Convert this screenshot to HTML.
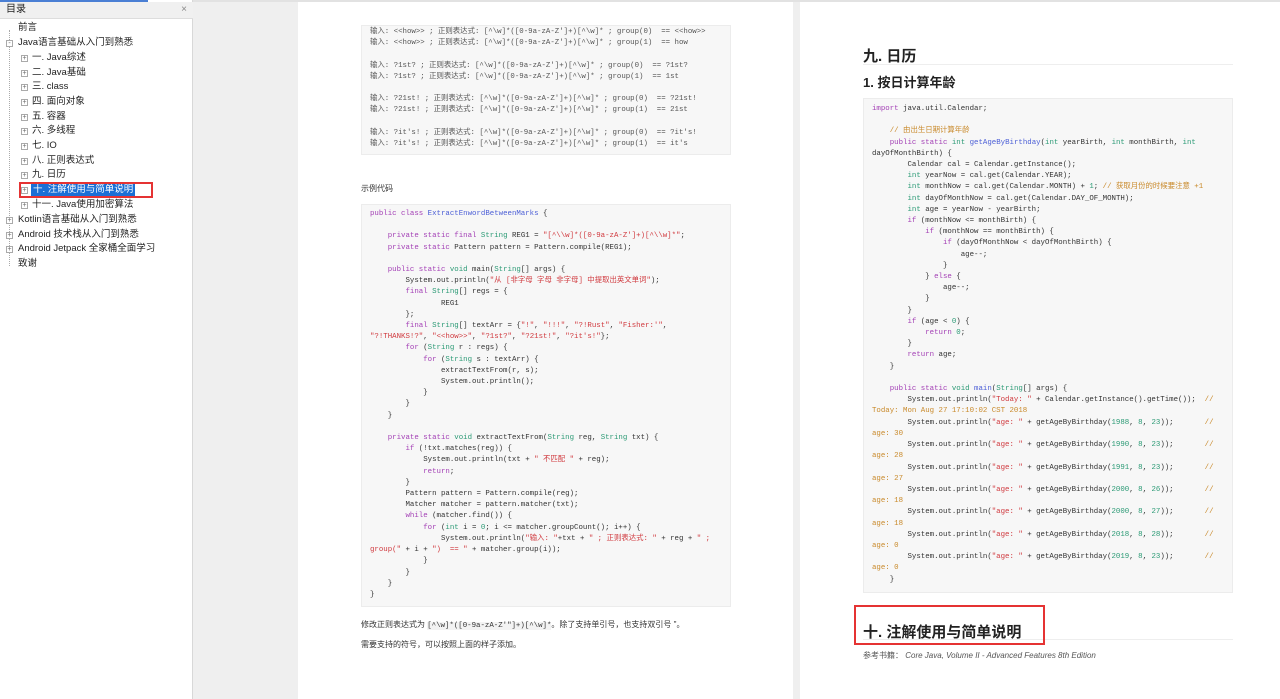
<!DOCTYPE html>
<html><head><meta charset="utf-8"><style>
*{margin:0;padding:0;box-sizing:border-box}
body{width:1280px;height:699px;overflow:hidden;background:#efefef;position:relative;font-family:"Liberation Sans","Noto Sans CJK SC",sans-serif;color:#333}
.side{position:absolute;left:0;top:0;width:193px;height:699px;background:#fff;border-right:1px solid #d8d8d8}
.bar{position:absolute;left:0;top:0;width:148px;height:2px;background:#4a7fd4}
.tt{position:absolute;left:0;top:2px;width:193px;height:17px;background:#f0f0f0;border-bottom:1px solid #ddd;font-size:10px;line-height:16px;padding:0 0 0 6px;color:#222}
.tt span{position:absolute;right:6px;top:0;color:#888;font-size:10px}
.it{position:absolute;font-size:9.5px;color:#222;white-space:nowrap;line-height:12px}
.pl{position:absolute;width:7px;height:7px;border:1px solid #aaa;font-size:7px;line-height:5px;text-align:center;color:#666;background:#fff}
.page{position:absolute;background:#fff;top:2px;height:697px}
.code{position:absolute;background:#f7f7f7;border:1px solid #ececec;font-family:"Liberation Mono","Noto Sans CJK SC",monospace;font-size:7.4px;line-height:11.2px;white-space:pre;color:#333;padding:0 8px}
.k{color:#a33fb5}.t{color:#2b9a75}.s{color:#d0393e}.f{color:#4b5ed6}.c{color:#c98a2b}.n{color:#2b9a75}
.p{position:absolute;font-size:8px;color:#333;white-space:nowrap}
.tree{position:absolute;left:0;top:2px;width:193px;height:260px}
</style></head><body>
<div style="position:absolute;left:0;top:0;width:1280px;height:2px;background:#e2e2e2"></div>
<div class="side">
<div class="tt">目录<span>×</span></div>
<div class="bar"></div>
<div class="tree">
<div style="position:absolute;left:9px;top:28px;width:1px;height:236px;border-left:1px dotted #aaa"></div>
<div class="it" style="left:18px;top:20px">前言</div>
<div class="pl" style="left:6px;top:38px">-</div><div class="it" style="left:18px;top:35px">Java语言基础从入门到熟悉</div>
<div class="pl" style="left:21px;top:53px">+</div><div class="it" style="left:32px;top:50px">一. Java综述</div>
<div class="pl" style="left:21px;top:68px">+</div><div class="it" style="left:32px;top:65px">二. Java基础</div>
<div class="pl" style="left:21px;top:82px">+</div><div class="it" style="left:32px;top:79px">三. class</div>
<div class="pl" style="left:21px;top:97px">+</div><div class="it" style="left:32px;top:94px">四. 面向对象</div>
<div class="pl" style="left:21px;top:112px">+</div><div class="it" style="left:32px;top:109px">五. 容器</div>
<div class="pl" style="left:21px;top:126px">+</div><div class="it" style="left:32px;top:123px">六. 多线程</div>
<div class="pl" style="left:21px;top:141px">+</div><div class="it" style="left:32px;top:138px">七. IO</div>
<div class="pl" style="left:21px;top:156px">+</div><div class="it" style="left:32px;top:153px">八. 正则表达式</div>
<div class="pl" style="left:21px;top:170px">+</div><div class="it" style="left:32px;top:167px">九. 日历</div>
<div class="pl" style="left:21px;top:185px">+</div><div class="it" style="left:31px;top:182px;background:#1a6fd6;color:#fff;padding:0 2px">十. 注解使用与简单说明</div>
<div style="position:absolute;left:19px;top:180px;width:134px;height:16px;border:2px solid #e53333"></div>
<div class="pl" style="left:21px;top:200px">+</div><div class="it" style="left:32px;top:197px">十一. Java使用加密算法</div>
<div class="pl" style="left:6px;top:215px">+</div><div class="it" style="left:18px;top:212px">Kotlin语言基础从入门到熟悉</div>
<div class="pl" style="left:6px;top:230px">+</div><div class="it" style="left:18px;top:227px">Android 技术栈从入门到熟悉</div>
<div class="pl" style="left:6px;top:244px">+</div><div class="it" style="left:18px;top:241px">Android Jetpack 全家桶全面学习</div>
<div class="it" style="left:18px;top:256px">致谢</div>
</div>
</div>

<div class="page" style="left:298px;width:495px"></div>
<div class="page" style="left:800px;width:480px"></div>

<div class="code" style="left:361px;top:25px;width:370px;height:130px;padding-top:1px;color:#555">输入: &lt;&lt;how&gt;&gt; ; 正则表达式: [^\w]*([0-9a-zA-Z']+)[^\w]* ; group(0)  == &lt;&lt;how&gt;&gt;
输入: &lt;&lt;how&gt;&gt; ; 正则表达式: [^\w]*([0-9a-zA-Z']+)[^\w]* ; group(1)  == how

输入: ?1st? ; 正则表达式: [^\w]*([0-9a-zA-Z']+)[^\w]* ; group(0)  == ?1st?
输入: ?1st? ; 正则表达式: [^\w]*([0-9a-zA-Z']+)[^\w]* ; group(1)  == 1st

输入: ?21st! ; 正则表达式: [^\w]*([0-9a-zA-Z']+)[^\w]* ; group(0)  == ?21st!
输入: ?21st! ; 正则表达式: [^\w]*([0-9a-zA-Z']+)[^\w]* ; group(1)  == 21st

输入: ?it's! ; 正则表达式: [^\w]*([0-9a-zA-Z']+)[^\w]* ; group(0)  == ?it's!
输入: ?it's! ; 正则表达式: [^\w]*([0-9a-zA-Z']+)[^\w]* ; group(1)  == it's</div>

<div class="p" style="left:361px;top:183px">示例代码</div>

<div class="code" style="left:361px;top:204px;width:370px;height:403px;padding-top:4px"><span class="k">public class</span> <span class="f">ExtractEnwordBetweenMarks</span> {

    <span class="k">private static final</span> <span class="t">String</span> REG1 = <span class="s">"[^\\w]*([0-9a-zA-Z']+)[^\\w]*"</span>;
    <span class="k">private static</span> Pattern pattern = Pattern.compile(REG1);

    <span class="k">public static</span> <span class="t">void</span> main(<span class="t">String</span>[] args) {
        System.out.println(<span class="s">"从 [非字母 字母 非字母] 中提取出英文单词"</span>);
        <span class="k">final</span> <span class="t">String</span>[] regs = {
                REG1
        };
        <span class="k">final</span> <span class="t">String</span>[] textArr = {<span class="s">"!"</span>, <span class="s">"!!!"</span>, <span class="s">"?!Rust"</span>, <span class="s">"Fisher:'"</span>,
<span class="s">"?!THANKS!?"</span>, <span class="s">"&lt;&lt;how&gt;&gt;"</span>, <span class="s">"?1st?"</span>, <span class="s">"?21st!"</span>, <span class="s">"?it's!"</span>};
        <span class="k">for</span> (<span class="t">String</span> r : regs) {
            <span class="k">for</span> (<span class="t">String</span> s : textArr) {
                extractTextFrom(r, s);
                System.out.println();
            }
        }
    }

    <span class="k">private static</span> <span class="t">void</span> extractTextFrom(<span class="t">String</span> reg, <span class="t">String</span> txt) {
        <span class="k">if</span> (!txt.matches(reg)) {
            System.out.println(txt + <span class="s">" 不匹配 "</span> + reg);
            <span class="k">return</span>;
        }
        Pattern pattern = Pattern.compile(reg);
        Matcher matcher = pattern.matcher(txt);
        <span class="k">while</span> (matcher.find()) {
            <span class="k">for</span> (<span class="t">int</span> i = <span class="n">0</span>; i &lt;= matcher.groupCount(); i++) {
                System.out.println(<span class="s">"输入: "</span>+txt + <span class="s">" ; 正则表达式: "</span> + reg + <span class="s">" ;
group("</span> + i + <span class="s">")  == "</span> + matcher.group(i));
            }
        }
    }
}</div>

<div class="p" style="left:361px;top:619px">修改正则表达式为 <span style="font-family:'Liberation Mono',monospace;background:#f3f3f3;font-size:7.4px">[^\w]*([0-9a-zA-Z'"]+)[^\w]*</span>。除了支持单引号，也支持双引号 "。</div>
<div class="p" style="left:361px;top:639px">需要支持的符号，可以按照上面的样子添加。</div>

<div style="position:absolute;left:863px;top:45px;font-size:15px;font-weight:bold;color:#222">九. 日历</div>
<div style="position:absolute;left:863px;top:64px;width:370px;height:1px;background:#eee"></div>
<div style="position:absolute;left:863px;top:72px;font-size:13px;font-weight:bold;color:#222">1. 按日计算年龄</div>

<div class="code" style="left:863px;top:98px;width:370px;height:495px;padding-top:5px"><span class="k">import</span> java.util.Calendar;

    <span class="c">// 由出生日期计算年龄</span>
    <span class="k">public static</span> <span class="t">int</span> <span class="f">getAgeByBirthday</span>(<span class="t">int</span> yearBirth, <span class="t">int</span> monthBirth, <span class="t">int</span>
dayOfMonthBirth) {
        Calendar cal = Calendar.getInstance();
        <span class="t">int</span> yearNow = cal.get(Calendar.YEAR);
        <span class="t">int</span> monthNow = cal.get(Calendar.MONTH) + <span class="n">1</span>; <span class="c">// 获取月份的时候要注意 +1</span>
        <span class="t">int</span> dayOfMonthNow = cal.get(Calendar.DAY_OF_MONTH);
        <span class="t">int</span> age = yearNow - yearBirth;
        <span class="k">if</span> (monthNow &lt;= monthBirth) {
            <span class="k">if</span> (monthNow == monthBirth) {
                <span class="k">if</span> (dayOfMonthNow &lt; dayOfMonthBirth) {
                    age--;
                }
            } <span class="k">else</span> {
                age--;
            }
        }
        <span class="k">if</span> (age &lt; <span class="n">0</span>) {
            <span class="k">return</span> <span class="n">0</span>;
        }
        <span class="k">return</span> age;
    }

    <span class="k">public static</span> <span class="t">void</span> <span class="f">main</span>(<span class="t">String</span>[] args) {
        System.out.println(<span class="s">"Today: "</span> + Calendar.getInstance().getTime());  <span class="c">//
Today: Mon Aug 27 17:10:02 CST 2018</span>
        System.out.println(<span class="s">"age: "</span> + getAgeByBirthday(<span class="n">1988</span>, <span class="n">8</span>, <span class="n">23</span>));       <span class="c">//
age: 30</span>
        System.out.println(<span class="s">"age: "</span> + getAgeByBirthday(<span class="n">1990</span>, <span class="n">8</span>, <span class="n">23</span>));       <span class="c">//
age: 28</span>
        System.out.println(<span class="s">"age: "</span> + getAgeByBirthday(<span class="n">1991</span>, <span class="n">8</span>, <span class="n">23</span>));       <span class="c">//
age: 27</span>
        System.out.println(<span class="s">"age: "</span> + getAgeByBirthday(<span class="n">2000</span>, <span class="n">8</span>, <span class="n">26</span>));       <span class="c">//
age: 18</span>
        System.out.println(<span class="s">"age: "</span> + getAgeByBirthday(<span class="n">2000</span>, <span class="n">8</span>, <span class="n">27</span>));       <span class="c">//
age: 18</span>
        System.out.println(<span class="s">"age: "</span> + getAgeByBirthday(<span class="n">2018</span>, <span class="n">8</span>, <span class="n">28</span>));       <span class="c">//
age: 0</span>
        System.out.println(<span class="s">"age: "</span> + getAgeByBirthday(<span class="n">2019</span>, <span class="n">8</span>, <span class="n">23</span>));       <span class="c">//
age: 0</span>
    }</div>

<div style="position:absolute;left:863px;top:621px;font-size:15px;font-weight:bold;color:#222">十. 注解使用与简单说明</div>
<div style="position:absolute;left:863px;top:639px;width:370px;height:1px;background:#eee"></div>
<div style="position:absolute;left:854px;top:605px;width:191px;height:40px;border:2px solid #e53333"></div>
<div class="p" style="left:863px;top:650px;color:#555">参考书籍： <i>Core Java, Volume II - Advanced Features 8th Edition</i></div>
</body></html>
